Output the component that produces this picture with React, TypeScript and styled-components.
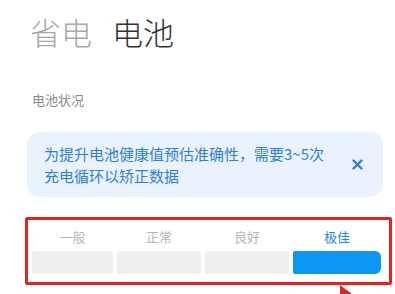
import React from "react";
import styled, { createGlobalStyle } from "styled-components";

const Global = createGlobalStyle`
  html, body { margin: 0; padding: 0; background: #ffffff; }
  body { font-family: "Noto Sans CJK SC", "Noto Sans", sans-serif; }
`;

const Page = styled.div`
  position: relative;
  width: 395px;
  height: 294px;
  overflow: hidden;
  padding-top: 13px;
  box-sizing: border-box;
`;

const TitleRow = styled.div`
  display: flex;
  gap: 20px;
  margin-left: 30px;
  font-size: 31px;
  line-height: 37px;
  font-weight: 300;
`;

const Tab = styled.span<{ $active?: boolean }>`
  color: ${(p) => (p.$active ? "#333333" : "#a8a8a8")};
`;

const SectionLabel = styled.div`
  margin: 41px 0 0 32px;
  font-size: 13px;
  line-height: 18px;
  color: #8a8a8a;
`;

const Notice = styled.div`
  margin: 23px 0 0 27px;
  width: 356px;
  height: 65px;
  box-sizing: border-box;
  background: #eaf3fd;
  border-radius: 13px;
  display: flex;
  align-items: center;
  padding: 0 0 0 17px;
`;

const NoticeText = styled.div`
  width: 286px;
  font-size: 15px;
  line-height: 22px;
  color: #2f80d4;
`;

const Close = styled.div`
  margin-left: 20px;
  display: flex;
  align-items: center;
  justify-content: center;
  width: 14px;
  height: 14px;
`;

const RatingBox = styled.div`
  margin: 20px 0 0 25px;
  width: 367px;
  box-sizing: border-box;
  border: 3px solid #e3231f;
  border-radius: 2px;
  padding: 8px 6px 8px 4px;
`;

const Grid = styled.div`
  display: grid;
  grid-template-columns: 81px 84px 84px 88px;
  column-gap: 4px;
`;

const Label = styled.div<{ $active?: boolean }>`
  text-align: center;
  font-size: 13px;
  line-height: 18px;
  color: ${(p) => (p.$active ? "#2a86d6" : "#b4b4b4")};
`;

const Bar = styled.div<{ $active?: boolean; $last?: boolean }>`
  margin-top: 5px;
  height: 23px;
  background: ${(p) => (p.$active ? "#0b96f4" : "#efefef")};
  border-radius: ${(p) => (p.$last ? "2px 6px 6px 2px" : "2px")};
`;

const Arrow = styled.svg`
  position: absolute;
  left: 338px;
  top: 284px;
`;

const levels = ["一般", "正常", "良好", "极佳"];

export default function App() {
  return (
    <>
      <Global />
      <Page>
        <TitleRow>
          <Tab>省电</Tab>
          <Tab $active>电池</Tab>
        </TitleRow>
        <SectionLabel>电池状况</SectionLabel>
        <Notice>
          <NoticeText>为提升电池健康值预估准确性，需要3~5次充电循环以矫正数据</NoticeText>
          <Close>
            <svg width="11" height="11" viewBox="0 0 11 11">
              <path d="M1.5 1.5 L9.5 9.5 M9.5 1.5 L1.5 9.5" stroke="#2f80d4" strokeWidth="2.4" strokeLinecap="round" />
            </svg>
          </Close>
        </Notice>
        <RatingBox>
          <Grid>
            {levels.map((l, i) => (
              <Label key={l} $active={i === 3}>{l}</Label>
            ))}
            {levels.map((l, i) => (
              <Bar key={l + "b"} $active={i === 3} $last={i === 3} />
            ))}
          </Grid>
        </RatingBox>
        <Arrow width="20" height="12" viewBox="0 0 20 12">
          <polygon points="2,1 14,10 14,12 2,12" fill="#e3231f" />
        </Arrow>
      </Page>
    </>
  );
}
